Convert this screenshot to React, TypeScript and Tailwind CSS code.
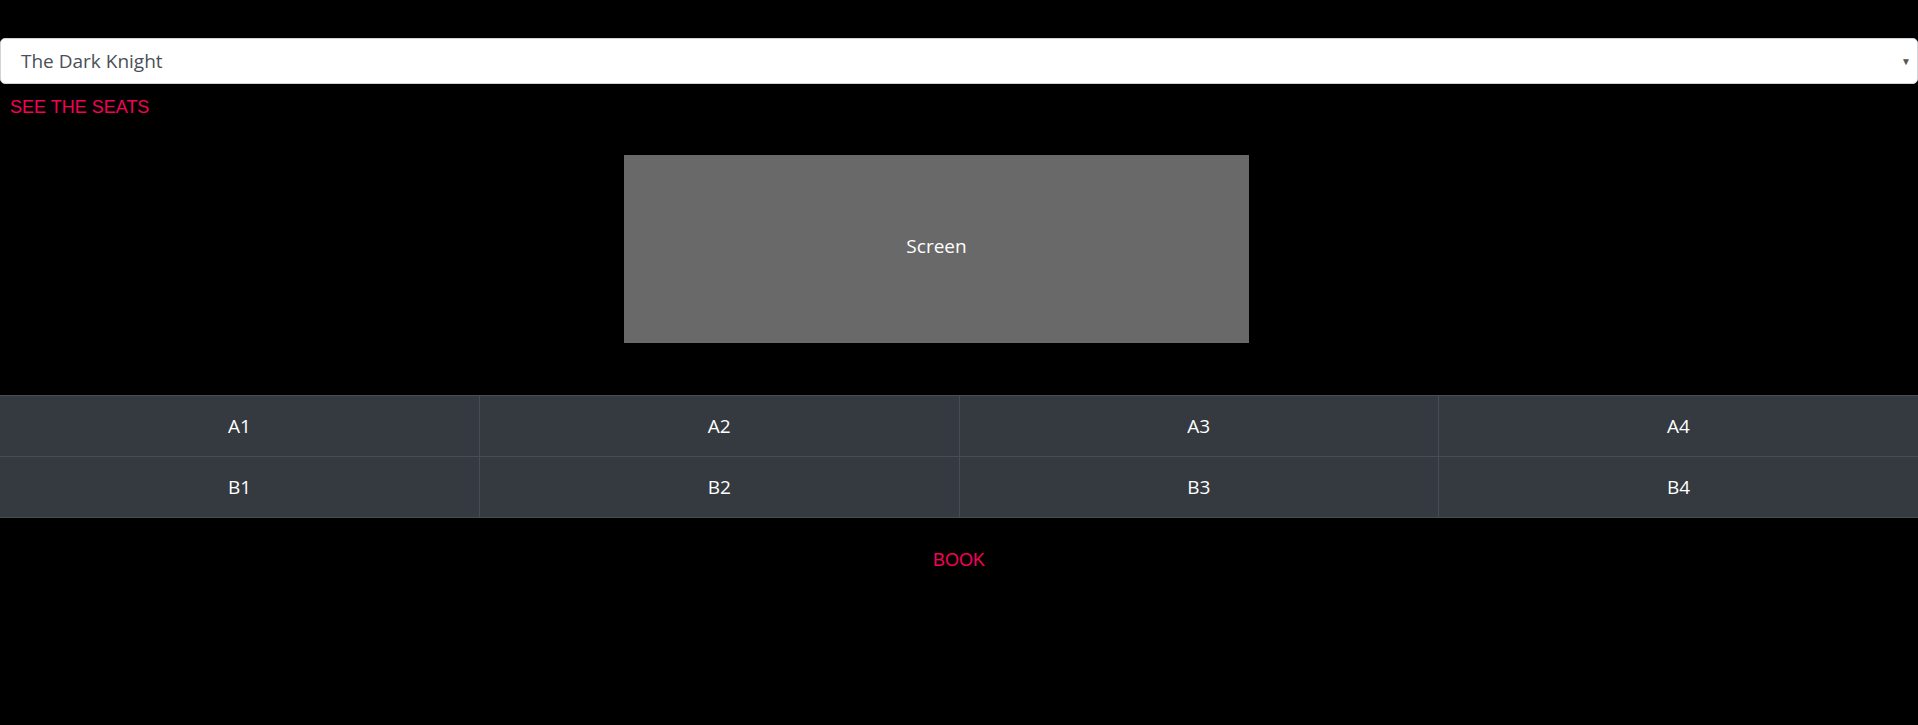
import React from "react";

const seats = [
  ["A1", "A2", "A3", "A4"],
  ["B1", "B2", "B3", "B4"],
];

export default function App() {
  return (
    <div className="w-full min-h-[725px] bg-black pt-[38px] font-['Open_Sans',sans-serif]">
      <MovieSelect value="The Dark Knight" />
      <div className="mt-[14px] pl-[10px] h-[18px] leading-none text-[18px] text-[#f50057] font-['Liberation_Sans',Arial,sans-serif]">
        SEE THE SEATS
      </div>

      <div className="mt-[39px] ml-[624px] w-[625px] h-[188px] pb-[5px] bg-[#696969] flex items-center justify-center text-white text-[19px]">
        Screen
      </div>

      <table className="mt-[52px] w-full border-collapse table-fixed bg-[#343a40] text-white text-[19px]">
        <tbody>
          {seats.map((row, i) => (
            <tr key={i}>
              {row.map((s) => (
                <td
                  key={s}
                  className="h-[61px] border border-[#454d55] first:border-l-0 last:border-r-0 text-center align-middle"
                >
                  {s}
                </td>
              ))}
            </tr>
          ))}
        </tbody>
      </table>

      <div className="mt-[33px] flex justify-center">
        <span className="h-[18px] leading-none text-[18px] text-[#f50057] font-['Liberation_Sans',Arial,sans-serif]">
          BOOK
        </span>
      </div>
    </div>
  );
}

function MovieSelect({ value }: { value: string }) {
  return (
    <div className="h-[46px] bg-white border border-[#ced4da] rounded-[5px] flex items-center pl-[20px] pr-[6px] text-[19px] text-[#495057]">
      <span className="flex-1">{value}</span>
      <span className="text-[10px] text-[#555]">▼</span>
    </div>
  );
}
